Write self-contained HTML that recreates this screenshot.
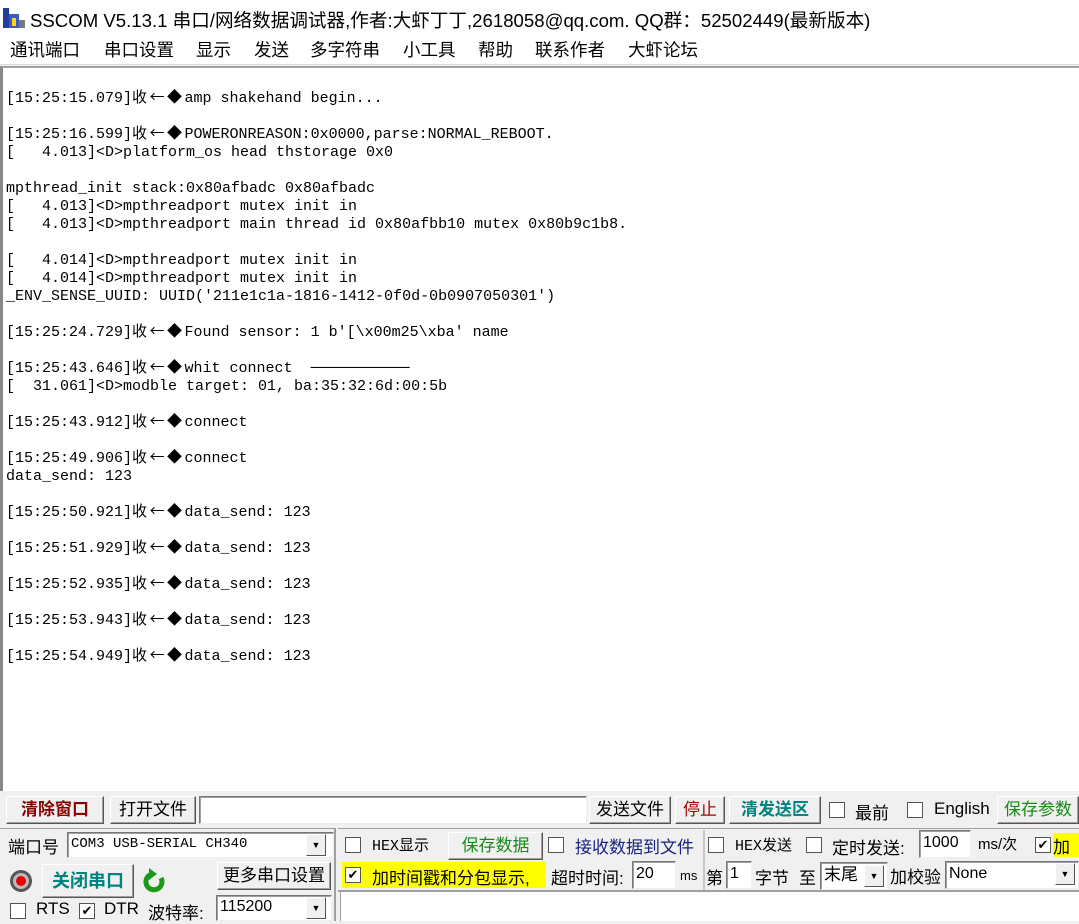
<!DOCTYPE html>
<html><head><meta charset="utf-8"><style>
*{margin:0;padding:0;box-sizing:border-box}
body{width:1079px;height:921px;overflow:hidden;background:#f0f0f0;font-family:"Liberation Sans","Noto Sans CJK SC",sans-serif;position:relative;color:#000}
.a{position:absolute;white-space:nowrap}
.title{left:0;top:0;width:1079px;height:33px;background:#fff}
.menu{left:0;top:33px;width:1079px;height:32px;background:#fff;border-bottom:1px solid #ddd;font-size:17.5px}
.log{left:0;top:66px;width:1079px;height:725px;background:#fff;border-left:3px solid #888;border-top:2px solid #a0a0a0}
.log div{position:absolute;left:3px;margin-top:2px;height:18px;line-height:18px;font-family:"Liberation Mono",monospace;font-size:15px;white-space:pre;color:#000}
.log b{font-weight:normal;font-family:"Noto Sans CJK SC",sans-serif;letter-spacing:2.5px;font-size:15px;line-height:0}
.btn{position:absolute;background:#f0f0f0;border:1px solid;border-color:#fff #555 #555 #fff;box-shadow:inset -1px -1px 0 #a0a0a0;font-size:17px;text-align:center;line-height:26px}
.inp{position:absolute;background:#fff;border:1px solid;border-color:#777 #eee #eee #777;box-shadow:inset 1px 1px 0 #a0a0a0;font-size:15px;padding-left:3px}
.cb{position:absolute;width:16px;height:16px;background:#fff;border:1px solid #555;font-size:13px;line-height:14px;text-align:center}
.t{position:absolute;white-space:nowrap;font-size:17px}
.dd{position:absolute;width:20px;height:22px;background:#f0f0f0;border:1px solid;border-color:#fff #555 #555 #fff;font-size:9px;text-align:center;line-height:20px}
</style></head><body>
<div class="a title">
<svg style="position:absolute;left:3px;top:6px" width="22" height="22"><rect x="0" y="2" width="6" height="20" fill="#223c9a"/><rect x="6" y="8" width="10" height="14" fill="#3a5ac8"/><rect x="9" y="12" width="4" height="8" fill="#ffd700"/><rect x="16" y="14" width="6" height="8" fill="#777"/></svg>
<span class="a" style="left:30px;top:6px;font-size:18.6px">SSCOM V5.13.1 串口/网络数据调试器,作者:大虾丁丁,2618058@qq.com. QQ群：52502449(最新版本)</span>
</div>
<div class="a menu">
<span class="a" style="left:10px;top:4px">通讯端口</span>
<span class="a" style="left:104px;top:4px">串口设置</span>
<span class="a" style="left:196px;top:4px">显示</span>
<span class="a" style="left:254px;top:4px">发送</span>
<span class="a" style="left:310px;top:4px">多字符串</span>
<span class="a" style="left:403px;top:4px">小工具</span>
<span class="a" style="left:478px;top:4px">帮助</span>
<span class="a" style="left:535px;top:4px">联系作者</span>
<span class="a" style="left:628px;top:4px">大虾论坛</span>
</div>
<div class="a log">
<div style="top:20px">[15:25:15.079]<b>收←◆</b>amp shakehand begin...</div>
<div style="top:56px">[15:25:16.599]<b>收←◆</b>POWERONREASON:0x0000,parse:NORMAL_REBOOT.</div>
<div style="top:74px">[   4.013]&lt;D&gt;platform_os head thstorage 0x0</div>
<div style="top:110px">mpthread_init stack:0x80afbadc 0x80afbadc</div>
<div style="top:128px">[   4.013]&lt;D&gt;mpthreadport mutex init in</div>
<div style="top:146px">[   4.013]&lt;D&gt;mpthreadport main thread id 0x80afbb10 mutex 0x80b9c1b8.</div>
<div style="top:182px">[   4.014]&lt;D&gt;mpthreadport mutex init in</div>
<div style="top:200px">[   4.014]&lt;D&gt;mpthreadport mutex init in</div>
<div style="top:218px">_ENV_SENSE_UUID: UUID('211e1c1a-1816-1412-0f0d-0b0907050301')</div>
<div style="top:254px">[15:25:24.729]<b>收←◆</b>Found sensor: 1 b'[\x00m25\xba' name</div>
<div style="top:290px">[15:25:43.646]<b>收←◆</b>whit connect  ───────────</div>
<div style="top:308px">[  31.061]&lt;D&gt;modble target: 01, ba:35:32:6d:00:5b</div>
<div style="top:344px">[15:25:43.912]<b>收←◆</b>connect</div>
<div style="top:380px">[15:25:49.906]<b>收←◆</b>connect</div>
<div style="top:398px">data_send: 123</div>
<div style="top:434px">[15:25:50.921]<b>收←◆</b>data_send: 123</div>
<div style="top:470px">[15:25:51.929]<b>收←◆</b>data_send: 123</div>
<div style="top:506px">[15:25:52.935]<b>收←◆</b>data_send: 123</div>
<div style="top:542px">[15:25:53.943]<b>收←◆</b>data_send: 123</div>
<div style="top:578px">[15:25:54.949]<b>收←◆</b>data_send: 123</div>
</div>

<!-- row 1 -->
<div class="btn" style="left:6px;top:796px;width:98px;height:28px;color:#8b0000;font-weight:bold">清除窗口</div>
<div class="btn" style="left:110px;top:796px;width:86px;height:28px">打开文件</div>
<div class="inp" style="left:199px;top:796px;width:388px;height:28px"></div>
<div class="btn" style="left:589px;top:796px;width:82px;height:28px">发送文件</div>
<div class="btn" style="left:675px;top:796px;width:50px;height:28px;color:#a00">停止</div>
<div class="btn" style="left:729px;top:796px;width:92px;height:28px;color:#00847f;font-weight:bold">清发送区</div>
<div class="cb" style="left:829px;top:802px"></div><span class="t" style="left:855px;top:799px">最前</span>
<div class="cb" style="left:907px;top:802px"></div><span class="t" style="left:934px;top:799px">English</span>
<div class="btn" style="left:997px;top:796px;width:82px;height:28px;color:#1a8a1a">保存参数</div>

<!-- left panel -->
<div class="a" style="left:0;top:828px;width:336px;height:93px;border-top:1px solid #a0a0a0;border-right:2px solid #a0a0a0"></div>
<span class="t" style="left:8px;top:833px">端口号</span>
<div class="inp" style="left:67px;top:832px;width:267px;height:26px;font-family:'Liberation Mono',monospace;font-size:14px;line-height:22px">COM3 USB-SERIAL CH340</div>
<div class="dd" style="left:306px;top:834px">▼</div>
<svg style="position:absolute;left:9px;top:869px" width="24" height="24"><circle cx="12" cy="12" r="11" fill="#555"/><circle cx="12" cy="12" r="8" fill="#bbb"/><circle cx="12" cy="12" r="5" fill="#e00"/></svg>
<div class="btn" style="left:42px;top:864px;width:92px;height:34px;color:#00847f;font-weight:bold;line-height:32px;font-size:18px">关闭串口</div>
<svg style="position:absolute;left:143px;top:866px" width="24" height="30"><path d="M18 12 A8 8 0 1 1 9 8" stroke="#1a9a1a" stroke-width="5" fill="none"/><path d="M6 2 L14 8 L6 14 Z" fill="#1a9a1a"/></svg>
<div class="btn" style="left:217px;top:862px;width:114px;height:28px">更多串口设置</div>
<div class="cb" style="left:10px;top:903px"></div><span class="t" style="left:36px;top:899px">RTS</span>
<div class="cb" style="left:79px;top:903px">✔</div><span class="t" style="left:104px;top:899px">DTR</span>
<span class="t" style="left:148px;top:899px">波特率:</span>
<div class="inp" style="left:216px;top:895px;width:116px;height:26px;line-height:22px;font-size:16px">115200</div>
<div class="dd" style="left:306px;top:897px">▼</div>

<!-- right panel -->
<div class="a" style="left:338px;top:828px;width:741px;height:64px;border-top:1px solid #a0a0a0;border-bottom:2px solid #a0a0a0"></div>
<div class="a" style="left:340px;top:892px;width:739px;height:29px;background:#fff;border-left:1px solid #a0a0a0"></div>
<div class="cb" style="left:345px;top:837px"></div><span class="t" style="left:372px;top:834px;font-family:'Liberation Mono','Noto Sans CJK SC',monospace;font-size:15px">HEX显示</span>
<div class="btn" style="left:448px;top:832px;width:95px;height:28px;color:#1a8a1a">保存数据</div>
<div class="cb" style="left:548px;top:837px"></div><span class="t" style="left:575px;top:833px;color:#1a237e">接收数据到文件</span>
<div class="a" style="left:703px;top:830px;width:2px;height:60px;background:#c8c8c8"></div>
<div class="cb" style="left:708px;top:837px"></div><span class="t" style="left:735px;top:834px;font-family:'Liberation Mono','Noto Sans CJK SC',monospace;font-size:15px">HEX发送</span>
<div class="cb" style="left:806px;top:837px"></div><span class="t" style="left:832px;top:834px">定时发送:</span>
<div class="inp" style="left:919px;top:830px;width:52px;height:28px;line-height:24px;font-size:16px">1000</div>
<span class="t" style="left:978px;top:833px;font-size:15px">ms/次</span>
<div class="cb" style="left:1035px;top:837px">✔</div>
<div class="a" style="left:1053px;top:833px;width:26px;height:24px;background:#ff0;font-size:17px">加</div>
<div class="a" style="left:342px;top:862px;width:204px;height:26px;background:#ff0"></div>
<div class="cb" style="left:345px;top:867px;background:#fff">✔</div>
<span class="t" style="left:372px;top:864px">加时间戳和分包显示,</span>
<span class="t" style="left:551px;top:864px">超时时间:</span>
<div class="inp" style="left:632px;top:861px;width:44px;height:28px;line-height:24px;font-size:16px">20</div>
<span class="t" style="left:680px;top:868px;font-size:13px">ms</span>
<span class="t" style="left:706px;top:864px">第</span>
<div class="inp" style="left:726px;top:861px;width:26px;height:28px;line-height:24px;font-size:16px">1</div>
<span class="t" style="left:755px;top:864px">字节</span>
<span class="t" style="left:799px;top:864px">至</span>
<div class="inp" style="left:820px;top:862px;width:68px;height:28px;line-height:24px;font-size:17px">末尾</div>
<div class="dd" style="left:864px;top:865px">▼</div>
<span class="t" style="left:890px;top:863px">加校验</span>
<div class="inp" style="left:945px;top:861px;width:134px;height:28px;line-height:24px;font-size:16px">None</div>
<div class="dd" style="left:1055px;top:863px">▼</div>
</body></html>
